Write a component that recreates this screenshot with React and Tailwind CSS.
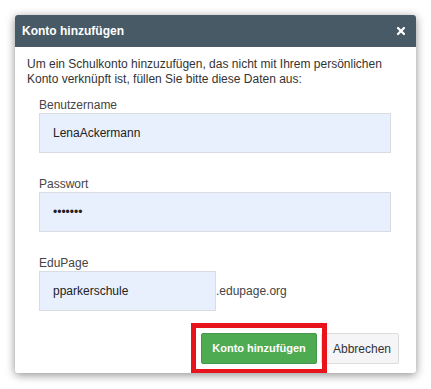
import { X } from "lucide-react";

function Field({ label, value, type = "text", width = "w-[352px]", suffix }) {
  return (
    <div className="flex flex-col">
      <label className="text-[12px] leading-[16px] text-[#444]">{label}</label>
      <div className="flex items-center">
        <input
          type={type}
          defaultValue={value}
          className={`${width} h-[40px] bg-[#e8f0fe] border border-[#d9dde3] px-[13px] text-[12px] text-[#222] outline-none`}
        />
        {suffix && <span className="text-[12px] text-[#444]">{suffix}</span>}
      </div>
    </div>
  );
}

export default function App() {
  return (
    <div className="w-[431px] h-[389px] bg-white pt-[15px] pl-[15px] font-['Liberation_Sans',Arial,sans-serif]">
      <div className="w-[401px] h-[358px] bg-white rounded-[3px] shadow-[0_2px_10px_rgba(0,0,0,0.45)] flex flex-col overflow-hidden">
        <div className="h-[32px] bg-[#485a65] flex items-center justify-between px-[7px]">
          <span className="text-white font-bold text-[12px]">Konto hinzufügen</span>
          <X className="w-[12px] h-[12px] text-white mr-[2px]" strokeWidth={4.5} />
        </div>
        <div className="px-[12px] pt-[10px]">
          <p className="text-[12px] leading-[15px] text-[#333]">
            Um ein Schulkonto hinzuzufügen, das nicht mit Ihrem persönlichen Konto verknüpft ist, füllen Sie bitte diese Daten aus:
          </p>
          <div className="pl-[12px] pt-[10px] flex flex-col gap-[23px]">
            <Field label="Benutzername" value="LenaAckermann" />
            <Field label="Passwort" value="ppppppp" type="password" />
            <Field label="EduPage" value="pparkerschule" width="w-[177px]" suffix=".edupage.org" />
          </div>
          <div className="flex justify-end gap-[4px] pr-[5px] mt-[22px]">
            <div className="relative">
              <button className="h-[31px] w-[116px] bg-[#4fab52] border border-[#44984a] rounded-[2px] text-white font-bold text-[11px]">
                Konto hinzufügen
              </button>
              <span className="absolute -inset-[10px] border-[5px] border-[#e8141c] pointer-events-none"></span>
            </div>
            <button className="h-[31px] w-[78px] bg-[#f5f5f8] border border-[#dcdcdc] rounded-[2px] text-[#333] text-[12px] pl-[4px]">
              Abbrechen
            </button>
          </div>
        </div>
      </div>
    </div>
  );
}
